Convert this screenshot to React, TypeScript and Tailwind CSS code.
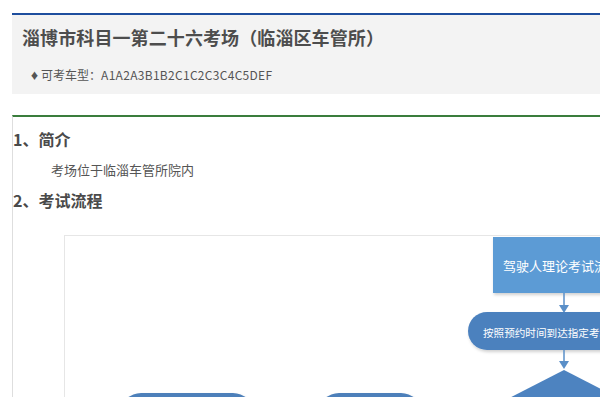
import React from "react";

const cjk = '"Noto Sans CJK SC", "Noto Sans", sans-serif';

function Flow() {
  return (
    <svg width="560" height="170" viewBox="0 0 560 170" className="block">
      <defs>
        <filter id="sh" x="-10%" y="-20%" width="130%" height="160%">
          <feDropShadow dx="1" dy="2" stdDeviation="1.5" floodColor="#000" floodOpacity="0.18" />
        </filter>
      </defs>
      <rect x="428" y="1" width="200" height="56" fill="#5b9bd5" filter="url(#sh)" />
      <text x="438" y="35" fill="#fff" fontSize="13" style={{ fontFamily: cjk }}>
        驾驶人理论考试流程
      </text>
      <line x1="499" y1="57" x2="499" y2="70" stroke="#5a8fc8" strokeWidth="1.5" />
      <polygon points="494,69 504,69 499,77" fill="#5a8fc8" />
      <rect x="403" y="76" width="260" height="38" rx="19" fill="#4c81be" filter="url(#sh)" />
      <text x="418" y="100.5" fill="#fff" fontSize="10.6" style={{ fontFamily: cjk }}>
        按照预约时间到达指定考场
      </text>
      <line x1="499" y1="114" x2="499" y2="126" stroke="#5a8fc8" strokeWidth="1.5" />
      <polygon points="494,125 504,125 499,133" fill="#5a8fc8" />
      <polygon points="499,134 620,196 499,258 378,196" fill="#4d83c0" />
      <rect x="56" y="157" width="132" height="40" rx="20" fill="#4e80ba" filter="url(#sh)" />
      <rect x="254" y="157" width="102" height="40" rx="20" fill="#4e80ba" filter="url(#sh)" />
    </svg>
  );
}

export default function App() {
  return (
    <div
      className="w-[600px] h-[397px] overflow-hidden bg-white pt-[13px] pl-[12px] text-[#555]"
      style={{ fontFamily: cjk }}
    >
      <div className="w-[640px] border-t-2 border-[#1e4e9e] bg-[#f3f3f3] pl-[10px] pt-[10px] pb-[8px]">
        <div className="text-[18px] leading-[24px] font-bold text-[#4d4d4d] tracking-[0.1px]">
          淄博市科目一第二十六考场（临淄区车管所）
        </div>
        <div className="mt-[17px] text-[12px] leading-[18px] pl-[8px] text-[#555]">
          <span className="text-[9px] relative top-[-1px] mr-[2px]">♦</span>可考车型：
          <span className="tracking-[0.3px]">A1A2A3B1B2C1C2C3C4C5DEF</span>
        </div>
      </div>
      <div className="mt-[21px] w-[640px] h-[300px] border-t-2 border-l border-t-[#3a7d3c] border-l-[#dedede]">
        <div className="pt-[11px] text-[16px] leading-[22px] font-bold text-[#4a4a4a]">1、简介</div>
        <div className="mt-[11px] pl-[38px] text-[13px] leading-[18px] text-[#555]">考场位于临淄车管所院内</div>
        <div className="mt-[10px] text-[16px] leading-[22px] font-bold text-[#4a4a4a]">2、考试流程</div>
        <div className="mt-[24px] ml-[51px] border-t border-l border-[#e6e6e6]">
          <Flow />
        </div>
      </div>
    </div>
  );
}
